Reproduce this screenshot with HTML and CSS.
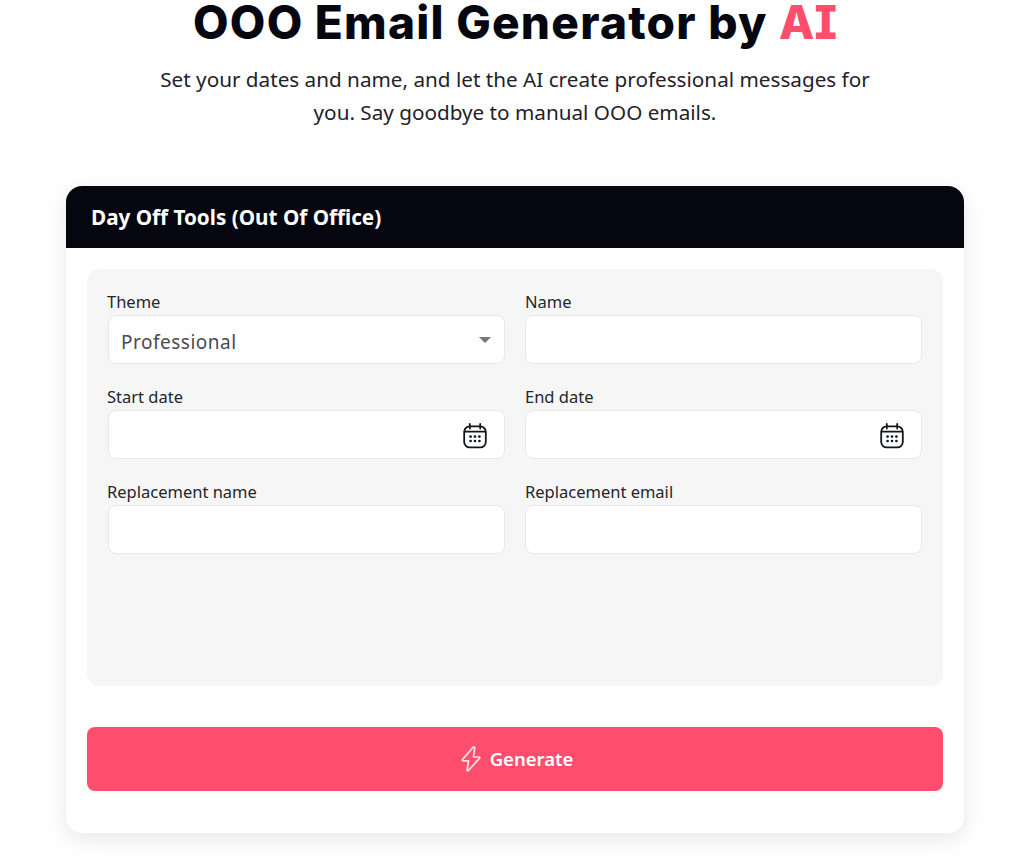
FILE: index.html
```html
<!DOCTYPE html>
<html lang="en">
<head>
<meta charset="utf-8">
<title>OOO Email Generator by AI</title>
<link rel="stylesheet" href="styles.css">
</head>
<body>
<main class="page">
  <h1 class="title">OOO Email Generator by <span class="accent">AI</span></h1>
  <p class="lead">Set your dates and name, and let the AI create professional messages for<br>you. Say goodbye to manual OOO emails.</p>
  <section class="card">
    <header class="card-head">Day Off Tools (Out Of Office)</header>
    <div class="card-body">
      <div class="panel">
        <div class="field">
          <label class="label">Theme</label>
          <div class="control control-select">
            <span class="value">Professional</span>
            <svg class="caret" width="12" height="6" viewBox="0 0 12 6"><path d="M0 0h12L6 6z" fill="#757575"/></svg>
          </div>
        </div>
        <div class="field">
          <label class="label">Name</label>
          <div class="control"></div>
        </div>
        <div class="field">
          <label class="label">Start date</label>
          <div class="control control-date">
            <svg class="cal" width="24" height="26" viewBox="0 0 24 26" fill="none" stroke="#14161c" stroke-width="1.8" stroke-linecap="round"><rect x="1.2" y="3.4" width="21.6" height="21" rx="5.5"/><path d="M6.8 1v4.6M17.2 1v4.6M1.6 8.6h20.8"/><g fill="#14161c" stroke="none"><circle cx="7.6" cy="13.6" r="1.35"/><circle cx="12" cy="13.6" r="1.35"/><circle cx="16.4" cy="13.6" r="1.35"/><circle cx="7.6" cy="18" r="1.35"/><circle cx="12" cy="18" r="1.35"/><circle cx="16.4" cy="18" r="1.35"/></g></svg>
          </div>
        </div>
        <div class="field">
          <label class="label">End date</label>
          <div class="control control-date">
            <svg class="cal" width="24" height="26" viewBox="0 0 24 26" fill="none" stroke="#14161c" stroke-width="1.8" stroke-linecap="round"><rect x="1.2" y="3.4" width="21.6" height="21" rx="5.5"/><path d="M6.8 1v4.6M17.2 1v4.6M1.6 8.6h20.8"/><g fill="#14161c" stroke="none"><circle cx="7.6" cy="13.6" r="1.35"/><circle cx="12" cy="13.6" r="1.35"/><circle cx="16.4" cy="13.6" r="1.35"/><circle cx="7.6" cy="18" r="1.35"/><circle cx="12" cy="18" r="1.35"/><circle cx="16.4" cy="18" r="1.35"/></g></svg>
          </div>
        </div>
        <div class="field">
          <label class="label">Replacement name</label>
          <div class="control"></div>
        </div>
        <div class="field">
          <label class="label">Replacement email</label>
          <div class="control"></div>
        </div>
      </div>
      <button class="generate" type="button">
        <svg width="20" height="26" viewBox="0 0 20 26" fill="none" stroke="#ffe3e8" stroke-width="1.7" stroke-linejoin="round"><path d="M12.2 1.2 1.4 13.6c-.4.5-.1 1.2.6 1.2h5.6L6 24c-.1.8.7 1.1 1.2.6l11.4-12.4c.4-.5.1-1.2-.6-1.2h-5.6l1.4-9.2c.1-.8-.9-1.2-1.6-.6z"/></svg>
        <span class="generate-text">Generate</span>
      </button>
    </div>
  </section>
</main>
</body>
</html>
```

FILE: styles.css
```css
* { box-sizing: border-box; }
html, body { margin: 0; background: #fff; }
body {
  font-family: "Noto Sans", sans-serif;
  color: #1b1d24;
}
.page {
  width: 1024px;
  height: 859px;
  overflow: hidden;
  padding: 0 60px 0 66px;
  display: flex;
  flex-direction: column;
  align-items: center;
}
.title {
  margin: 0;
  font-family: "Inter", sans-serif;
  font-weight: 800;
  font-size: 46px;
  line-height: 44px;
  letter-spacing: 1.25px;
  color: #05060f;
  white-space: nowrap;
}
.accent {
  font-feature-settings: "ss02";
  letter-spacing: 0;
  color: #ff4d6d;
}
.lead {
  margin: 19px 0 0;
  width: 100%;
  text-align: center;
  font-size: 20.7px;
  line-height: 33px;
  color: #1f2229;
}
.card {
  margin-top: 57px;
  width: 898px;
  height: 647px;
  border-radius: 16px;
  background: #fff;
  box-shadow: 0 6px 22px rgba(20, 20, 30, 0.1);
  display: flex;
  flex-direction: column;
  align-self: flex-start;
  overflow: hidden;
}
.card-head {
  height: 62px;
  padding: 0 25px;
  display: flex;
  align-items: center;
  background: #05060f;
  color: #fff;
  font-size: 20.7px;
  font-weight: 700;
}
.card-body {
  padding: 21px;
  display: flex;
  flex-direction: column;
  gap: 41px;
}
.panel {
  height: 417px;
  padding: 22px 21px;
  border-radius: 12px;
  background: #f6f6f6;
  display: grid;
  grid-template-columns: 397px 397px;
  grid-auto-rows: 49px;
  column-gap: 20px;
  row-gap: 46px;
  align-content: start;
}
.field {
  display: flex;
  flex-direction: column;
  height: 73px;
}
.label {
  height: 24px;
  font-size: 16.5px;
  line-height: 22px;
  color: #24262d;
}
.field:nth-child(odd) .label { margin-left: -1px; }
.control {
  height: 49px;
  padding: 0 13px 0 12px;
  display: flex;
  align-items: center;
  justify-content: space-between;
  background: #fff;
  border: 1px solid #e8e8ea;
  border-radius: 8px;
}
.control-date { justify-content: flex-end; padding-right: 17px; }
.cal { margin-top: 2px; }
.value {
  padding-top: 4px;
  font-size: 19px;
  letter-spacing: 0.5px;
  color: #4a4a50;
}
.generate {
  height: 64px;
  padding: 0 0 0 4px;
  border: 0;
  border-radius: 8px;
  background: #ff4d6d;
  color: #fff;
  font-family: inherit;
  font-size: 18.5px;
  font-weight: 600;
  display: flex;
  align-items: center;
  justify-content: center;
  gap: 9px;
}
.generate-text { padding-bottom: 2px; }
```
